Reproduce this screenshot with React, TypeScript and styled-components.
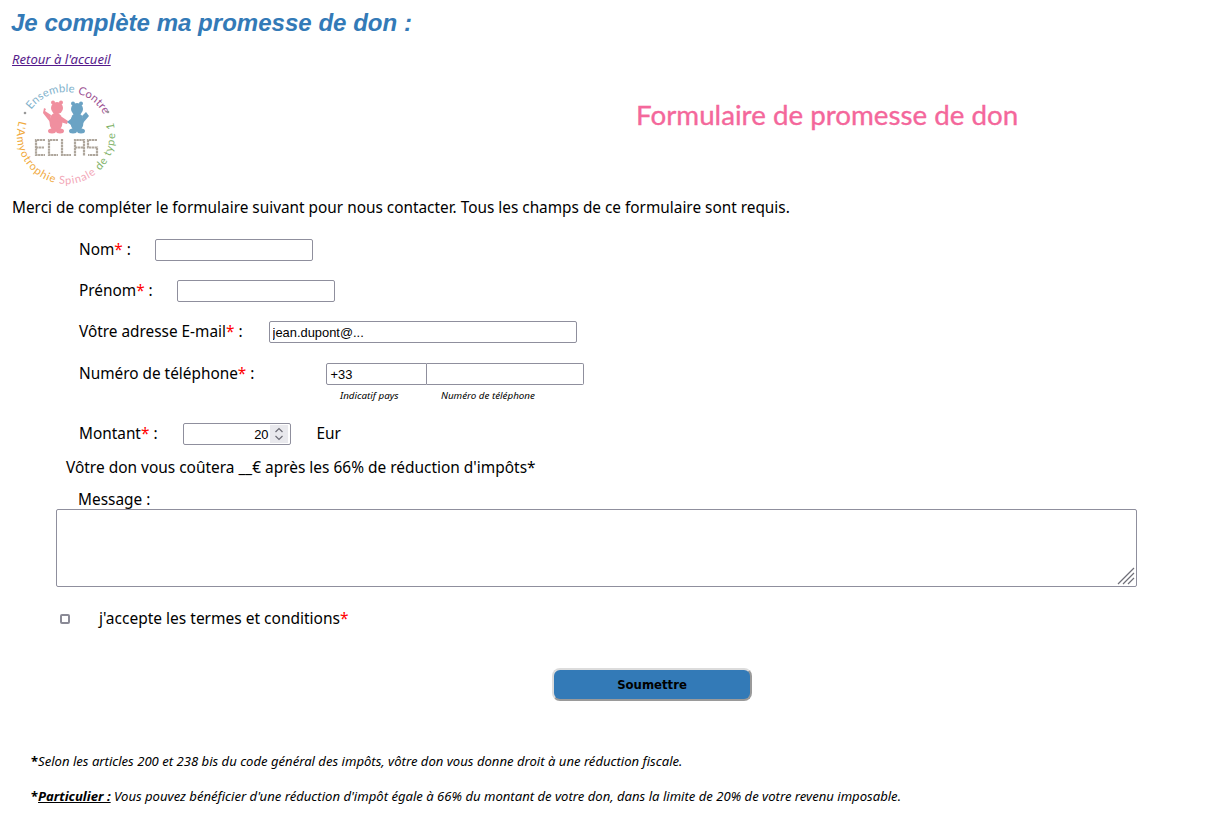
import React from "react";
import styled, { createGlobalStyle } from "styled-components";

const Global = createGlobalStyle`
  html, body { margin: 0; padding: 0; background: #fff; }
  body { font-family: "Noto Sans", "Open Sans", sans-serif; color: #000; }
`;
const Page = styled.div`
  padding: 8px 12px 0;
  height: 807px;
  overflow: hidden;
`;
const Heading = styled.h1`
  margin: 0 0 0 -1px;
  font: italic bold 24.05px/30px "Liberation Sans", Arial, sans-serif;
  color: #337ab7;
`;
const BackLink = styled.a`
  display: block;
  margin-top: 13px;
  font: italic 13.1px/16px "Noto Sans", sans-serif;
  color: #551a8b;
  text-decoration: underline;
`;
const Banner = styled.div`
  display: flex;
  align-items: flex-start;
  margin: 15px 0 0 1px;
`;
const LogoMark = styled.svg`
  overflow: visible;
  flex: none;
`;
const FormTitle = styled.h2`
  margin: 15px 0 0 517px;
  font: 400 27.75px/36px "Lato", sans-serif;
  color: #f4679b;
  -webkit-text-stroke: 0.35px #f4679b;
`;
const Intro = styled.p`
  margin: 10px 0 0;
  font-size: 15.36px;
  line-height: 20px;
`;
const Row = styled.div<{ $top: number; $gap: number }>`
  display: flex;
  align-items: center;
  height: 22px;
  margin: ${(p) => p.$top}px 0 0 67px;
  gap: ${(p) => p.$gap}px;
  font-size: 15.36px;
`;
const Label = styled.span`
  padding-bottom: 2px;
`;
const Unit = styled(Label)`
  margin-left: 1px;
`;
const Star = styled.span`
  color: #f00;
`;
const TextInput = styled.input<{ $w: number }>`
  box-sizing: border-box;
  width: ${(p) => p.$w}px;
  height: 22px;
  padding: 1px 3px;
  border: 1px solid #8f8f9d;
  border-radius: 2px;
  font: 12.9px "Liberation Sans", Arial, sans-serif;
  color: #000;
  background: #fff;
`;
const PhoneGroup = styled.div`
  display: flex;
`;
const PhoneCode = styled(TextInput)`
  border-radius: 2px 0 0 2px;
`;
const PhoneNumber = styled(TextInput)`
  border-left: 0;
  border-radius: 0 2px 2px 0;
`;
const Captions = styled.div`
  display: flex;
  margin: 5px 0 0 328px;
  height: 12px;
  font: italic 9.8px/12px "Noto Sans", sans-serif;
`;
const Caption = styled.span<{ $w: number }>`
  width: ${(p) => p.$w}px;
`;
const AmountWrap = styled.div`
  position: relative;
  display: flex;
`;
const AmountInput = styled(TextInput)`
  text-align: right;
  padding-right: 21px;
  appearance: textfield;
  &::-webkit-inner-spin-button { appearance: none; margin: 0; }
`;
const Spinner = styled.span`
  position: absolute;
  top: 2px;
  right: 3px;
  width: 18px;
  height: 18px;
  background: #e9e9ed;
  display: flex;
  align-items: center;
  justify-content: center;
  pointer-events: none;
`;
const Cost = styled.p`
  margin: 11px 0 0 54px;
  font-size: 15.45px;
  line-height: 22px;
`;
const MessageLabel = styled.div`
  margin: 12px 0 0 66px;
  font-size: 15.4px;
  line-height: 19px;
`;
const MessageWrap = styled.div`
  position: relative;
  width: 1081px;
  height: 78px;
  margin-left: 44px;
`;
const MessageBox = styled.textarea`
  display: block;
  box-sizing: border-box;
  width: 100%;
  height: 100%;
  margin: 0;
  resize: none;
  border: 1px solid #8f8f9d;
  border-radius: 2px;
`;
const ResizeGrip = styled.svg`
  position: absolute;
  right: 2px;
  bottom: 2px;
  pointer-events: none;
`;
const TermsRow = styled.label`
  display: flex;
  align-items: center;
  height: 22px;
  margin: 20px 0 0 48px;
  gap: 29px;
  font-size: 15.5px;
`;
const Check = styled.input`
  appearance: none;
  box-sizing: border-box;
  width: 10px;
  height: 10px;
  margin: 1px 0 0;
  border: 2px solid #8a8a96;
  border-radius: 2px;
  background: #fff;
`;
const SubmitWrap = styled.div`
  display: flex;
  margin: 39px 0 0 540px;
`;
const Submit = styled.button`
  box-sizing: border-box;
  width: 200px;
  height: 33px;
  padding-top: 2px;
  border: 2px solid;
  border-color: #dcdcdc #9a9a9a #9a9a9a #dcdcdc;
  border-radius: 8px;
  background: #337ab7;
  color: #000;
  font: bold 11.7px "DejaVu Sans", Verdana, sans-serif;
`;
const Note = styled.p<{ $top: number }>`
  margin: ${(p) => p.$top}px 0 0 19px;
  font: italic 13.1px/20px "Noto Sans", sans-serif;
`;
const NoteStar = styled.b`
  font-style: normal;
  font-size: 13px;
`;
const Strong = styled.b`
  text-decoration: underline;
`;

const Logo = () => (
  <LogoMark width="106" height="106" viewBox="0 0 106 106" aria-label="ECLAS">
    <defs>
      <path id="logoTop" d="M10 53 A43 43 0 0 1 96 53" />
      <path id="logoBottom" d="M6.4 37.9 A49 49 0 1 0 99.6 37.9" />
    </defs>
    <text fontFamily="Lato, sans-serif" fontSize="11.2" letterSpacing="0.2">
      <textPath href="#logoTop" startOffset="27">
        <tspan fill="#7fb2cc">Ensemble </tspan>
        <tspan fill="#9b4f92">Contre</tspan>
      </textPath>
    </text>
    <text fontFamily="Lato, sans-serif" fontSize="11" letterSpacing="0.85">
      <textPath href="#logoBottom" startOffset="1">
        <tspan fill="#f0a93c">L'Amyotrophie </tspan>
        <tspan fill="#f2a6b6">Spinale </tspan>
        <tspan fill="#7fb36a">de type 1</tspan>
      </textPath>
    </text>
    <circle cx="12" cy="31" r="1.3" fill="#999" />
    <circle cx="95" cy="30" r="1.3" fill="#999" />
    <g fill="#f08f9f" transform="translate(0 2)">
      <circle cx="44" cy="24" r="6" />
      <circle cx="40" cy="18.5" r="2" />
      <circle cx="48" cy="18.5" r="2" />
      <ellipse cx="43" cy="38" rx="6.5" ry="9.5" />
      <path d="M38 31 L32 27 L33 25 L31 24 L30 29 L37 38 Z" />
      <path d="M46 31 L55 37 L54 40 L44 37 Z" />
      <ellipse cx="39" cy="47" rx="4" ry="2.5" />
      <ellipse cx="47" cy="47" rx="4" ry="2.5" />
    </g>
    <g fill="#6ba3c4" transform="translate(0 2)">
      <circle cx="64" cy="25" r="6" />
      <circle cx="60" cy="19.5" r="2" />
      <circle cx="68" cy="19.5" r="2" />
      <ellipse cx="64" cy="38" rx="6.5" ry="9.5" />
      <path d="M69 32 L73 28 L76 32 L70 39 Z" />
      <path d="M59 34 L54 38 L58 41 Z" />
      <ellipse cx="60" cy="47" rx="4" ry="2.5" />
      <ellipse cx="68" cy="47" rx="4" ry="2.5" />
    </g>
    <g fill="none" stroke="#aea69c" strokeWidth="2.2" strokeDasharray="2.4 0.5">
      <path d="M32 58 H23 V73 H32 M23 65.5 H31" />
      <path d="M45 58 H36 V73 H45" />
      <path d="M49 57 V73 H58" />
      <path d="M62 74 V58 H71 V74 M62 65.5 H71" />
      <path d="M84 58 H75 V65.5 H84 V73 H75" />
    </g>
  </LogoMark>
);

export default function App() {
  return (
    <Page>
      <Global />
      <Heading>Je complète ma promesse de don :</Heading>
      <BackLink href="#">Retour à l'accueil</BackLink>
      <Banner>
        <Logo />
        <FormTitle>Formulaire de promesse de don</FormTitle>
      </Banner>
      <Intro>Merci de compléter le formulaire suivant pour nous contacter. Tous les champs de ce formulaire sont requis.</Intro>
      <Row $top={21} $gap={24}>
        <Label>Nom<Star>*</Star> :</Label>
        <TextInput $w={158} />
      </Row>
      <Row $top={19} $gap={24}>
        <Label>Prénom<Star>*</Star> :</Label>
        <TextInput $w={158} />
      </Row>
      <Row $top={19} $gap={26}>
        <Label>Vôtre adresse E-mail<Star>*</Star> :</Label>
        <TextInput $w={308} defaultValue="jean.dupont@..." />
      </Row>
      <Row $top={20} $gap={72}>
        <Label>Numéro de téléphone<Star>*</Star> :</Label>
        <PhoneGroup>
          <PhoneCode $w={101} defaultValue="+33" />
          <PhoneNumber $w={157} />
        </PhoneGroup>
      </Row>
      <Captions>
        <Caption $w={101}>Indicatif pays</Caption>
        <Caption $w={120}>Numéro de téléphone</Caption>
      </Captions>
      <Row $top={21} $gap={25}>
        <Label>Montant<Star>*</Star> :</Label>
        <AmountWrap>
          <AmountInput $w={108} type="number" defaultValue={20} />
          <Spinner>
            <svg width="10" height="16" viewBox="0 0 10 16" fill="none" stroke="#6d6d76" strokeWidth="1.2">
              <path d="M1.5 6 L5 2.5 L8.5 6 M1.5 10 L5 13.5 L8.5 10" />
            </svg>
          </Spinner>
        </AmountWrap>
        <Unit>Eur</Unit>
      </Row>
      <Cost>Vôtre don vous coûtera __€ après les 66% de réduction d'impôts*</Cost>
      <MessageLabel>Message :</MessageLabel>
      <MessageWrap>
        <MessageBox />
        <ResizeGrip width="18" height="18" viewBox="0 0 18 18" stroke="#6f6f78" strokeWidth="1.2">
          <path d="M1 17 L17 1 M6 17 L17 6 M11 17 L17 11" />
        </ResizeGrip>
      </MessageWrap>
      <TermsRow>
        <Check type="checkbox" />
        <span>j'accepte les termes et conditions<Star>*</Star></span>
      </TermsRow>
      <SubmitWrap>
        <Submit type="button">Soumettre</Submit>
      </SubmitWrap>
      <Note $top={50}><NoteStar>*</NoteStar>Selon les articles 200 et 238 bis du code général des impôts, vôtre don vous donne droit à une réduction fiscale.</Note>
      <Note $top={15}><NoteStar>*</NoteStar><Strong>Particulier :</Strong> Vous pouvez bénéficier d'une réduction d'impôt égale à 66% du montant de votre don, dans la limite de 20% de votre revenu imposable.</Note>
    </Page>
  );
}
